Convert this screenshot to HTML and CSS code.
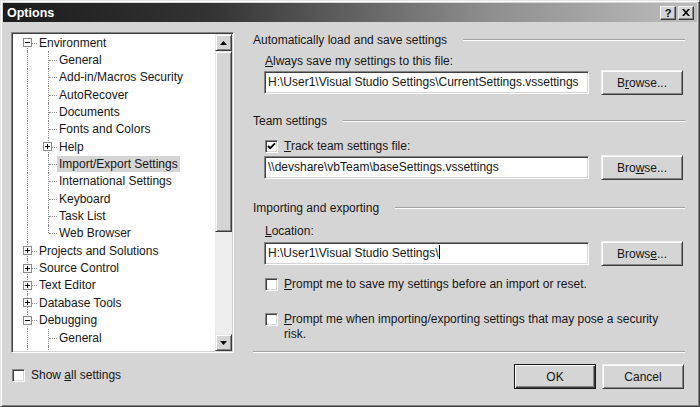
FILE: index.html
```html
<!DOCTYPE html>
<html lang="en">
<head>
  <meta charset="UTF-8">
  <title>Options</title>
  <link rel="stylesheet" href="styles.css">
</head>
<body>

<div class="window">
  <div class="titlebar">
    <span class="title">Options</span>
    <div class="caption">
      <span class="cap-btn">?</span>
      <span class="cap-btn">
        <svg width="8" height="7" viewBox="0 0 8 7"><path d="M0 0h2l2 2.2L6 0h2L5 3.5 8 7H6L4 4.8 2 7H0l3-3.5z" fill="#000"/></svg>
      </span>
    </div>
  </div>

  <div class="content">
    <div class="main">
      <div class="tree">
        <div class="tree-items">
          <div class="row"><span class="tw v first br"><svg class="exp" viewBox="0 0 9 9"><rect x=".5" y=".5" width="8" height="8" fill="#fff" stroke="#8a8a8a"/><path d="M2 4.5h5" stroke="#000"/></svg></span><span class="label">Environment</span></div>
          <div class="row"><span class="tw v"></span><span class="tw v br"></span><span class="label">General</span></div>
          <div class="row"><span class="tw v"></span><span class="tw v br"></span><span class="label">Add-in/Macros Security</span></div>
          <div class="row"><span class="tw v"></span><span class="tw v br"></span><span class="label">AutoRecover</span></div>
          <div class="row"><span class="tw v"></span><span class="tw v br"></span><span class="label">Documents</span></div>
          <div class="row"><span class="tw v"></span><span class="tw v br"></span><span class="label">Fonts and Colors</span></div>
          <div class="row"><span class="tw v"></span><span class="tw v br"><svg class="exp" viewBox="0 0 9 9"><rect x=".5" y=".5" width="8" height="8" fill="#fff" stroke="#8a8a8a"/><path d="M2 4.5h5M4.5 2v5" stroke="#000"/></svg></span><span class="label">Help</span></div>
          <div class="row"><span class="tw v"></span><span class="tw v br"></span><span class="label selected">Import/Export Settings</span></div>
          <div class="row"><span class="tw v"></span><span class="tw v br"></span><span class="label">International Settings</span></div>
          <div class="row"><span class="tw v"></span><span class="tw v br"></span><span class="label">Keyboard</span></div>
          <div class="row"><span class="tw v"></span><span class="tw v br"></span><span class="label">Task List</span></div>
          <div class="row"><span class="tw v"></span><span class="tw v last br"></span><span class="label">Web Browser</span></div>
          <div class="row"><span class="tw v br"><svg class="exp" viewBox="0 0 9 9"><rect x=".5" y=".5" width="8" height="8" fill="#fff" stroke="#8a8a8a"/><path d="M2 4.5h5M4.5 2v5" stroke="#000"/></svg></span><span class="label">Projects and Solutions</span></div>
          <div class="row"><span class="tw v br"><svg class="exp" viewBox="0 0 9 9"><rect x=".5" y=".5" width="8" height="8" fill="#fff" stroke="#8a8a8a"/><path d="M2 4.5h5M4.5 2v5" stroke="#000"/></svg></span><span class="label">Source Control</span></div>
          <div class="row"><span class="tw v br"><svg class="exp" viewBox="0 0 9 9"><rect x=".5" y=".5" width="8" height="8" fill="#fff" stroke="#8a8a8a"/><path d="M2 4.5h5M4.5 2v5" stroke="#000"/></svg></span><span class="label">Text Editor</span></div>
          <div class="row"><span class="tw v br"><svg class="exp" viewBox="0 0 9 9"><rect x=".5" y=".5" width="8" height="8" fill="#fff" stroke="#8a8a8a"/><path d="M2 4.5h5M4.5 2v5" stroke="#000"/></svg></span><span class="label">Database Tools</span></div>
          <div class="row"><span class="tw v br"><svg class="exp" viewBox="0 0 9 9"><rect x=".5" y=".5" width="8" height="8" fill="#fff" stroke="#8a8a8a"/><path d="M2 4.5h5" stroke="#000"/></svg></span><span class="label">Debugging</span></div>
          <div class="row"><span class="tw v"></span><span class="tw v br"></span><span class="label">General</span></div>
          <div class="row"><span class="tw v"></span><span class="tw v br"></span></div>
        </div>
        <div class="scrollbar">
          <span class="sb-btn"><svg width="7" height="4" viewBox="0 0 7 4"><path d="M3.5 0L7 4H0z" fill="#000"/></svg></span>
          <span class="sb-thumb"></span>
          <span class="sb-track"></span>
          <span class="sb-btn"><svg width="7" height="4" viewBox="0 0 7 4"><path d="M0 0h7L3.5 4z" fill="#000"/></svg></span>
        </div>
      </div>

      <div class="panel">
        <div class="group-head"><span>Automatically load and save settings</span><span class="rule"></span></div>
        <div class="field-label"><u>A</u>lways save my settings to this file:</div>
        <div class="field-row">
          <div class="textbox">H:\User1\Visual Studio Settings\CurrentSettings.vssettings</div>
          <button class="btn">B<u>r</u>owse...</button>
        </div>

        <div class="group-head team"><span>Team settings</span><span class="rule"></span></div>
        <label class="check-row track">
          <span class="cb"><svg width="9" height="9" viewBox="0 0 9 9"><path d="M1 4l2.2 2.2L8 1.4" stroke="#000" stroke-width="1.8" fill="none"/></svg></span>
          <span><u>T</u>rack team settings file:</span>
        </label>
        <div class="field-row tight">
          <div class="textbox">\\devshare\vbTeam\baseSettings.vssettings</div>
          <button class="btn">Bro<u>w</u>se...</button>
        </div>

        <div class="group-head import"><span>Importing and exporting</span><span class="rule"></span></div>
        <div class="field-label location"><u>L</u>ocation:</div>
        <div class="field-row tight">
          <div class="textbox">H:\User1\Visual Studio Settings\<span class="caret"></span></div>
          <button class="btn">Brows<u>e</u>...</button>
        </div>

        <label class="check-row prompt">
          <span class="cb"></span>
          <span><u>P</u>rompt me to save my settings before an import or reset.</span>
        </label>
        <label class="check-row prompt wrap">
          <span class="cb"></span>
          <span class="wrap-text">Prompt me when importing/exporting settings that may pose a security risk.</span>
        </label>

        <div class="separator"></div>
      </div>
    </div>

    <div class="footer">
      <label class="check-row show-all">
        <span class="cb"></span>
        <span>Show <u>a</u>ll settings</span>
      </label>
      <div class="actions">
        <button class="btn default">OK</button>
        <button class="btn">Cancel</button>
      </div>
    </div>
  </div>
</div>

</body>
</html>
```

FILE: styles.css
```css
body {
  margin: 0;
  background: #d5d5d5;
  font-family: "Liberation Sans", Arial, sans-serif;
  font-size: 12px;
  color: #161616;
}

.window {
  width: 700px;
  height: 407px;
  box-sizing: border-box;
  background: #d5d5d5;
  border: 1px solid;
  border-color: #e4e4e4 #3c3c3c #3c3c3c #e4e4e4;
  box-shadow: inset 1px 1px #fff, inset -1px -1px #858585;
  padding: 2px;
  display: flex;
  flex-direction: column;
}

.titlebar {
  height: 19px;
  display: flex;
  align-items: center;
  justify-content: space-between;
  padding: 0 3px 0 4px;
  background: linear-gradient(to right, #1c1c1c 0%, #333 30%, #8e8e8e 70%, #bdbdbd 100%);
}

.title {
  color: #fff;
  font-weight: bold;
  font-size: 12.5px;
}

.caption {
  display: flex;
  gap: 2px;
}

.cap-btn {
  width: 16px;
  height: 14px;
  box-sizing: border-box;
  display: flex;
  align-items: center;
  justify-content: center;
  background: #d5d5d5;
  border: 1px solid;
  border-color: #f2f2f2 #3c3c3c #3c3c3c #f2f2f2;
  box-shadow: inset -1px -1px #858585;
  font-weight: bold;
  font-size: 11px;
  color: #000;
}

.content {
  flex: 1;
  display: flex;
  flex-direction: column;
}

.main {
  display: flex;
  gap: 19px;
  margin: 10px 0 0 8px;
}

/* tree view */

.tree {
  width: 223px;
  height: 321px;
  box-sizing: border-box;
  background: #fff;
  border: 1px solid;
  border-color: #858585 #fff #fff #858585;
  box-shadow: inset 1px 1px #404040, inset -1px -1px #d5d5d5;
  padding: 1px;
  display: flex;
  overflow: hidden;
}

.tree-items {
  flex: 1;
  padding-left: 4px;
  overflow: hidden;
}

.row {
  height: 17.35px;
  display: flex;
  align-items: center;
  white-space: nowrap;
}

.tw {
  position: relative;
  width: 21px;
  height: 100%;
  flex: none;
  display: flex;
  align-items: center;
  justify-content: center;
}

.tw + .tw {
  width: 20px;
}

.tw.v::before {
  content: "";
  position: absolute;
  left: 10px;
  top: 0;
  bottom: 0;
  border-left: 1px dotted #8c8c8c;
}

.tw.first::before {
  top: 50%;
}

.tw.last::before {
  bottom: 50%;
}

.tw.br::after {
  content: "";
  position: absolute;
  left: 11px;
  right: 1px;
  top: 50%;
  border-top: 1px dotted #8c8c8c;
}

.exp {
  position: relative;
  z-index: 1;
  width: 9px;
  height: 9px;
  margin-left: -1px;
}

.label {
  padding: 1px 2px;
  margin-left: -1px;
}

.label.selected {
  background: #d5d5d5;
}

.scrollbar {
  width: 17px;
  flex: none;
  display: flex;
  flex-direction: column;
}

.sb-btn,
.sb-thumb {
  box-sizing: border-box;
  background: #d5d5d5;
  border: 1px solid;
  border-color: #e8e8e8 #3c3c3c #3c3c3c #e8e8e8;
  box-shadow: inset 1px 1px #fff, inset -1px -1px #858585;
}

.sb-btn {
  height: 17px;
  display: flex;
  align-items: center;
  justify-content: center;
}

.sb-thumb {
  height: 181px;
}

.sb-track {
  flex: 1;
  background: #eeeeee;
}

/* right panel */

.panel {
  width: 432px;
  display: flex;
  flex-direction: column;
}

.group-head {
  height: 16px;
  display: flex;
  align-items: center;
  gap: 16px;
}

.rule {
  flex: 1;
  border-top: 1px solid #a4a4a4;
  border-bottom: 1px solid #fff;
}

.group-head.team {
  margin-top: 18px;
}

.group-head.import {
  margin-top: 20px;
}

.field-label {
  height: 16px;
  line-height: 16px;
  margin: 5px 0 1px 12px;
}

.field-label.location {
  margin-top: 7px;
}

.field-row {
  display: flex;
  align-items: center;
  gap: 12px;
  margin-left: 11px;
  height: 25px;
}

.field-row.tight {
  margin-top: 1px;
}

.textbox {
  width: 325px;
  height: 23px;
  box-sizing: border-box;
  background: #fff;
  border: 1px solid;
  border-color: #858585 #fff #fff #858585;
  box-shadow: inset 1px 1px #404040, inset -1px -1px #d5d5d5;
  padding: 0 3px;
  line-height: 21px;
  white-space: nowrap;
  overflow: hidden;
}

.caret {
  display: inline-block;
  width: 1px;
  height: 14px;
  background: #000;
  vertical-align: -2px;
}

.btn {
  width: 82px;
  height: 25px;
  box-sizing: border-box;
  background: #d5d5d5;
  border: 1px solid;
  border-color: #f2f2f2 #3c3c3c #3c3c3c #f2f2f2;
  box-shadow: inset 1px 1px #fff, inset -1px -1px #858585;
  font-family: inherit;
  font-size: 12px;
  color: #161616;
  padding: 0;
}

.btn.default {
  border: 1px solid #1a1a1a;
  box-shadow: inset 1px 1px #fff, inset -1px -1px #3c3c3c, inset -2px -2px #858585;
}

.check-row {
  display: flex;
  align-items: center;
  gap: 6px;
  height: 16px;
  margin-left: 12px;
}

.check-row.track {
  margin-top: 9px;
}

.check-row.prompt {
  margin-top: 10px;
}

.check-row.wrap {
  margin-top: 20px;
  height: auto;
  align-items: flex-start;
}

.check-row.wrap .cb {
  margin-top: 1px;
}

.wrap-text {
  display: block;
  width: 380px;
  line-height: 15px;
}

.wrap-text::first-letter {
  text-decoration: underline;
}

.cb {
  width: 13px;
  height: 13px;
  flex: none;
  box-sizing: border-box;
  background: #fff;
  border: 1px solid;
  border-color: #858585 #fff #fff #858585;
  box-shadow: inset 1px 1px #404040, inset -1px -1px #d5d5d5;
  display: flex;
  align-items: center;
  justify-content: center;
}

.separator {
  margin-top: 9px;
  border-top: 1px solid #a4a4a4;
  border-bottom: 1px solid #fff;
}

/* footer */

.footer {
  display: flex;
  align-items: center;
  justify-content: space-between;
  margin: 11px 13px 0 9px;
  height: 25px;
}

.check-row.show-all {
  margin-left: 0;
  margin-top: -3px;
}

.actions {
  display: flex;
  gap: 6px;
}
```
